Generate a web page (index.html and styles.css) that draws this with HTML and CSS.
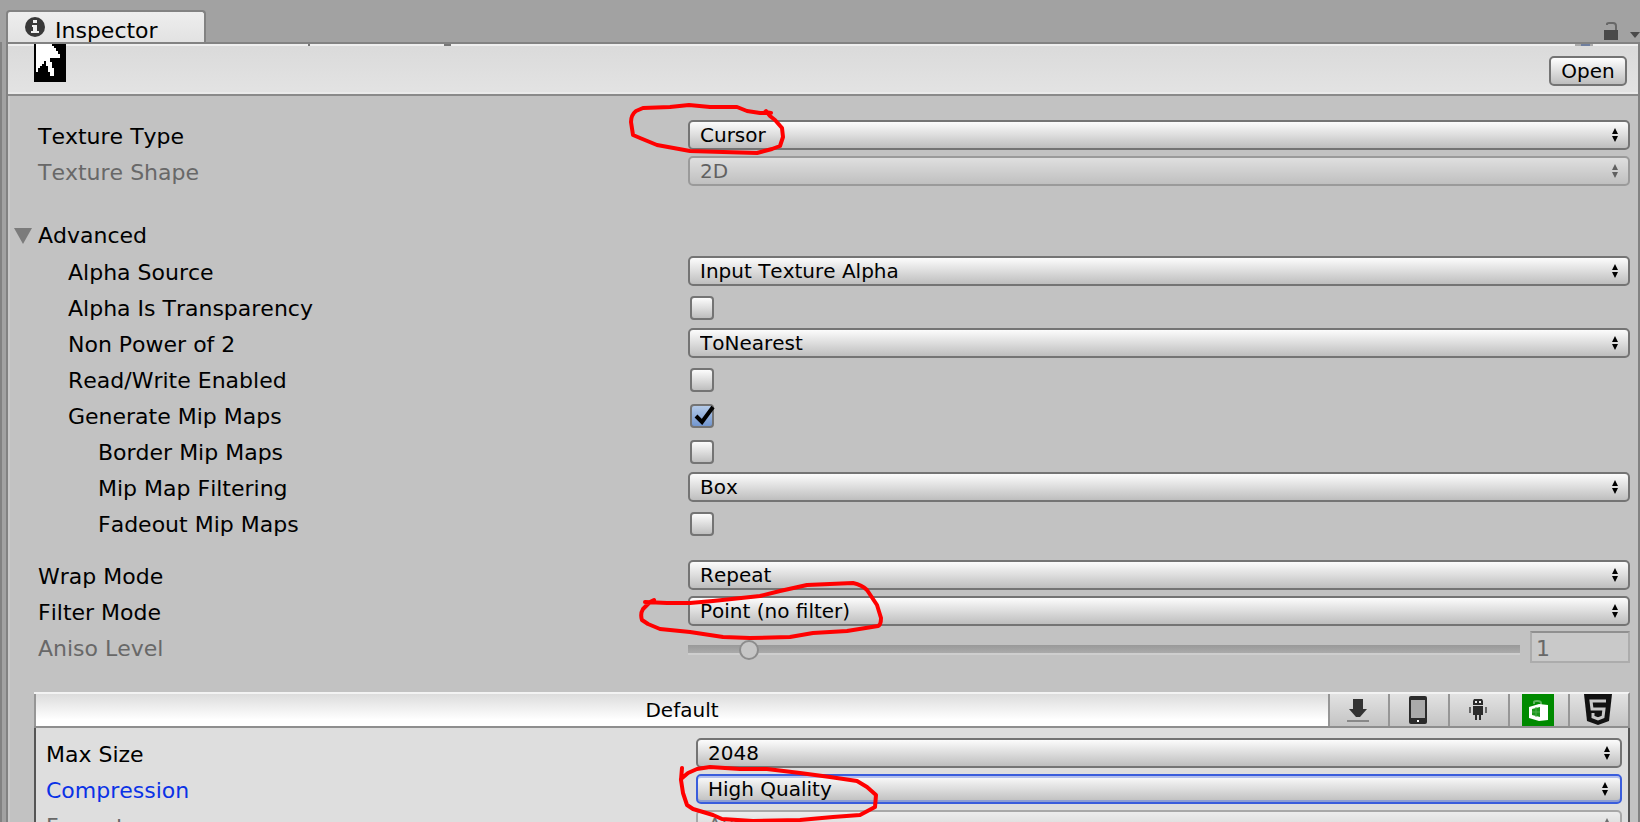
FILE: index.html
```html
<!DOCTYPE html>
<html lang="en">
<head>
    <meta charset="UTF-8">
    <meta name="viewport" content="width=device-width, initial-scale=1.0">
    <title>Inspector</title>
    <link rel="stylesheet" href="styles.css">
</head>
<body>
    <div class="edge"></div>
    <div class="window">
        <nav class="titlebar">
            <div class="tab">
                <svg width="22" height="22" viewBox="0 0 22 22"><circle cx="11" cy="11" r="10" fill="#383838"/><path d="M9 4h4v3H9zM8 9h5v6h2v2H7v-2h2v-4H8z" fill="#eee"/></svg>
                <span>Inspector</span>
            </div>
            <div class="tools">
                <svg width="14" height="20" viewBox="0 0 14 20"><path d="M0 10h14v10H0z" fill="#4a4a4a"/><path d="M3 5V4q0-1 2-1h4q3 0 3 3v4" fill="none" stroke="#686868" stroke-width="2"/></svg>
                <svg width="10" height="6" viewBox="0 0 10 6"><path d="M0 0h10L5 6z" fill="#4a4a4a"/></svg>
            </div>
        </nav>
        <div class="pane">
            <header>
                <svg class="thumb" width="32" height="38" viewBox="0 0 32 38" shape-rendering="crispEdges">
                    <path d="M0 0h32v38H0z"/>
                    <path d="M2 0h16v2h2v2h2v3h2v3h2v4H16v4h2v6h2v8h-4v-4h-2v-6h-2v-5h-2v3H8v2H6v2H4v4H2z" fill="#fff"/>
                </svg>
                <svg class="cut" width="150" height="2" viewBox="0 0 150 2"><path d="M1 0h2v2H1zM137 0h7v2h-7z" fill="#777"/></svg>
                <svg class="cut cut-right" width="18" height="2" viewBox="0 0 18 2"><path d="M0 0h18v2H0z" fill="#aaa"/><path d="M6 0h9v2H6z" fill="#6f7f9f"/></svg>
                <button type="button">Open</button>
            </header>
            <main>
                <div class="row">
                    <label for="type">Texture Type</label>
                    <select id="type"><option>Cursor</option></select>
                </div>
                <div class="row off">
                    <label for="shape">Texture Shape</label>
                    <select id="shape" disabled><option>2D</option></select>
                </div>

                <section class="advanced">
                    <h2><svg width="18" height="16" viewBox="0 0 18 16"><path d="M0 0h18L9 16z" fill="#7b7b7b"/></svg>Advanced</h2>
                    <div class="row in1">
                        <label for="source">Alpha Source</label>
                        <select id="source"><option>Input Texture Alpha</option></select>
                    </div>
                    <div class="row in1">
                        <label for="transparency">Alpha Is Transparency</label>
                        <input type="checkbox" id="transparency">
                    </div>
                    <div class="row in1">
                        <label for="npot">Non Power of 2</label>
                        <select id="npot"><option>ToNearest</option></select>
                    </div>
                    <div class="row in1">
                        <label for="rw">Read/Write Enabled</label>
                        <input type="checkbox" id="rw">
                    </div>
                    <div class="row in1">
                        <label for="mips">Generate Mip Maps</label>
                        <input type="checkbox" id="mips" checked>
                    </div>
                    <div class="row in2">
                        <label for="border">Border Mip Maps</label>
                        <input type="checkbox" id="border">
                    </div>
                    <div class="row in2">
                        <label for="filtering">Mip Map Filtering</label>
                        <select id="filtering"><option>Box</option></select>
                    </div>
                    <div class="row in2">
                        <label for="fadeout">Fadeout Mip Maps</label>
                        <input type="checkbox" id="fadeout">
                    </div>
                </section>

                <section class="sampling">
                    <div class="row">
                        <label for="wrap">Wrap Mode</label>
                        <select id="wrap"><option>Repeat</option></select>
                    </div>
                    <div class="row">
                        <label for="filter">Filter Mode</label>
                        <select id="filter"><option>Point (no filter)</option></select>
                    </div>
                    <div class="row off">
                        <label for="aniso">Aniso Level</label>
                        <div class="slider">
                            <input type="range" id="aniso" min="0" max="16" value="1" disabled>
                            <input type="text" value="1" aria-label="Aniso Level value" disabled>
                        </div>
                    </div>
                </section>

                <section class="platforms">
                    <div class="tabs">
                        <button type="button" class="active">Default</button>
                        <button type="button" aria-label="Standalone">
                            <svg width="22" height="24" viewBox="0 0 22 24"><path d="M6 1h10v10h4l-7 8H9l-7-8h4z" fill="#333"/><path d="M0 22h22v2H0z" fill="#888"/></svg>
                        </button>
                        <button type="button" aria-label="Mobile">
                            <svg width="18" height="28" viewBox="0 0 18 28"><rect width="18" height="28" rx="2" fill="#2b2b2b"/><path d="M2 4h14v18H2z" fill="#aaa"/><path d="M8 24h2v2H8z" fill="#fff"/></svg>
                        </button>
                        <button type="button" aria-label="Android">
                            <svg width="18" height="22" viewBox="0 0 18 22"><path d="M5 0h8l1 2v4H4V2zM4 7h10v9H4zM6 16h2v5H6zM10 16h2v5h-2z" fill="#2b2b2b"/><path d="M0 8h2v6H0zM16 8h2v6h-2z" fill="#666"/><path d="M6 2h2v2H6zM10 2h2v2h-2z" fill="#eee"/></svg>
                        </button>
                        <button type="button" aria-label="Windows Store">
                            <svg width="32" height="32" viewBox="0 0 32 32"><path d="M0 0h32v32H0z" fill="#008a00"/><path d="M12 10V8q0-1 3-1 4 0 4 2v2" fill="none" stroke="#5fb45f" stroke-width="2"/><path d="M7 13l10-3 9 1v15l-9 1-10-3z" fill="#fff"/><path d="M10 15l8-2v10l-8-2z" fill="#1a961a"/><path d="M14 13v10M10 18h8" stroke="#4cae4c"/></svg>
                        </button>
                        <button type="button" aria-label="WebGL">
                            <svg width="28" height="32" viewBox="0 0 28 32"><path d="M0 0h28l-3 27-11 4-11-4z" fill="#111"/><path d="M22 7H7l1 8h12l-1 8-5 2-5-2v-4" fill="none" stroke="#c8c8c8" stroke-width="3"/></svg>
                        </button>
                    </div>
                    <div class="settings">
                        <div class="row">
                            <label for="size">Max Size</label>
                            <select id="size"><option>2048</option></select>
                        </div>
                        <div class="row selected">
                            <label for="compression">Compression</label>
                            <select id="compression"><option>High Quality</option></select>
                        </div>
                        <div class="row off">
                            <label for="format">Format</label>
                            <select id="format" disabled><option>Auto</option></select>
                        </div>
                    </div>
                </section>
            </main>
        </div>
    </div>

    <!-- red pen marks -->
    <svg class="marks" width="900" height="822" viewBox="0 0 900 822">
        <path d="M765 112L771 113L760 113L747 111L737 107L710 107L689 105L670 107L643 108L636 111Q631 115 631 122L633 135L640 138L657 145L690 151L723 152L757 153L772 149L780 146L783 137L782 128L775 120L770 116L766 111"/>
        <path d="M645 602L667 603L690 603L713 601L760 596L780 591L807 585L830 584L853 583Q862 585 867 590L877 605L881 618Q881 625 878 626L847 631L813 633L790 637L750 638L723 637L690 632L660 629L648 624L642 620Q640 614 643 609L650 602L654 600"/>
        <path d="M682 768L681 780L683 793L687 805L693 809L713 815L722 819L753 821L800 820L833 817L860 815L875 807L876 795L867 787L857 781L830 777L800 773L767 769L740 769L710 767L697 769L688 773L681 779"/>
    </svg>
</body>
</html>
```
FILE: styles.css
```css
:root {
    --bar: #a2a2a2;
    --body: #c2c2c2;
    --line: #828282;
    --border: #747474;
    --blue: #0a32e6;
}
* {
    margin: 0;
    padding: 0;
    box-sizing: border-box;
}

body {
    display: flex;
    height: 100vh;
    overflow: hidden;
    background-color: var(--bar);
    color: #000;
    font-family: Verdana, "DejaVu Sans", sans-serif;
    font-size: 22px;
    font-kerning: none;
    line-height: 30px;
}
svg {
    display: block;
    flex: none;
}
button, select, input {
    font-family: inherit;
    font-size: 20px;
    font-kerning: none;
    color: #000;
    appearance: none;
    border-radius: 0;
}

/* sliver of the neighbouring panel */
.edge {
    width: 6px;
    margin-top: 42px;
    border-left: 2px solid var(--line);
}
.window {
    flex: 1;
    min-width: 0;
    display: flex;
    flex-direction: column;
}
.titlebar {
    display: flex;
    justify-content: space-between;
    height: 42px;
    padding-top: 10px;
}
.tab {
    display: flex;
    width: 200px;
    height: 32px;
    padding-left: 16px;
    gap: 9px;
    border: 2px solid var(--line);
    border-bottom: none;
    border-radius: 4px 4px 0 0;
    background: linear-gradient(#eee, #e2e2e2);
}
.tab svg {
    margin-top: 4px;
}
.tab span {
    padding-top: 4px;
}
.tools {
    display: flex;
    align-items: flex-end;
    padding-bottom: 2px;
    gap: 12px;
}
.tools svg + svg {
    margin-bottom: 2px;
}
.pane {
    flex: 1;
    min-height: 0;
    overflow: hidden;
    border: 2px solid var(--line);
    border-bottom: none;
    background-color: var(--body);
    box-shadow: inset 2px 0 #cacaca;
}

header {
    position: relative;
    display: flex;
    justify-content: space-between;
    height: 52px;
    padding: 0 11px 0 26px;
    background: linear-gradient(#dadada, #e3e3e3);
    border-bottom: 2px solid #8a8a8a;
    box-shadow: inset 0 2px #eee, inset 0 -2px #eaeaea;
}
header button {
    width: 78px;
    height: 30px;
    margin-top: 12px;
    border: 2px solid var(--border);
    border-radius: 5px;
    background: linear-gradient(#fff, #bebebe);
}
/* bottoms of the scrolled-away title row */
.cut {
    position: absolute;
    top: 0;
    left: 299px;
}
.cut-right {
    left: auto;
    right: 45px;
}

main {
    padding: 21px 8px 0 30px;
}
.row {
    display: flex;
    align-items: center;
    height: 36px;
}
.row label {
    flex: none;
    width: 650px;
    padding-top: 3px;
}
.in1 label {
    padding-left: 30px;
}
.in2 label {
    padding-left: 60px;
}
.off label {
    color: #686868;
}

select {
    flex: 1;
    min-width: 0;
    height: 30px;
    padding: 0 10px;
    border: 2px solid var(--border);
    border-radius: 5px;
    background:
        url("data:image/svg+xml,%3Csvg xmlns='http://www.w3.org/2000/svg' width='6' height='14'%3E%3Cpath d='M3 0l3 6H0zM3 14l3-6H0z'/%3E%3C/svg%3E") no-repeat right 10px center,
        linear-gradient(#fcfcfc, #bebebe);
}
select:disabled {
    opacity: .5;
}

input[type=checkbox] {
    position: relative;
    width: 24px;
    height: 24px;
    margin: 2px 0 0 2px;
    border: 2px solid var(--border);
    border-radius: 4px;
    background: linear-gradient(#fcfcfc, #bebebe);
}
input[type=checkbox]:checked {
    background: linear-gradient(#b4cae8, #7296cf);
}
input[type=checkbox]:checked::after {
    content: "";
    position: absolute;
    left: 2px;
    top: -1px;
    width: 22px;
    height: 20px;
    background: url("data:image/svg+xml,%3Csvg xmlns='http://www.w3.org/2000/svg' width='22' height='20'%3E%3Cpath d='M2 11l6 6L19 2' fill='none' stroke='%23000' stroke-width='4'/%3E%3C/svg%3E") no-repeat;
}

.advanced {
    margin-top: 28px;
}
.advanced h2 {
    display: flex;
    align-items: center;
    height: 36px;
    margin-left: -24px;
    padding-top: 2px;
    gap: 6px;
    font-size: 22px;
    font-weight: normal;
}
.sampling {
    margin-top: 16px;
}

.slider {
    flex: 1;
    display: flex;
    align-items: center;
    gap: 10px;
}
.slider input[type=range] {
    flex: 1;
    height: 20px;
    margin-top: 5px;
    background: linear-gradient(#999, #aaa 80%, #cecece 80%) no-repeat center / 100% 10px;
}
input[type=range]::-webkit-slider-thumb {
    appearance: none;
    width: 20px;
    height: 20px;
    border: 2px solid #8c8c8c;
    border-radius: 50%;
    background: #c6c6c6;
}
.slider input[type=text] {
    width: 100px;
    height: 32px;
    padding: 2px 4px 0;
    border: 2px solid #acacac;
    border-top-color: #909090;
    background-color: #c9c9c9;
    font-size: 22px;
    color: #686868;
}

.platforms {
    margin: 27px 0 0 -4px;
}
.tabs {
    display: flex;
    height: 36px;
    border-top: 2px solid #f3f3f3;
    border-bottom: 2px solid #8e8e8e;
    border-right: 2px solid #969696;
}
.tabs button {
    display: flex;
    align-items: center;
    justify-content: center;
    width: 60px;
    padding-right: 3px;
    border: none;
    border-left: 2px solid #969696;
    background: linear-gradient(#e2e2e2, #c4c4c4);
}
.tabs .active {
    flex: 1;
    padding-right: 0;
    background: linear-gradient(#dcdcdc, #fff 80%);
}
.settings {
    padding: 7px 6px 0 10px;
    border: 2px solid #555;
    border-top: none;
    background-color: #dedede;
}
.selected label {
    color: var(--blue);
}
.selected select {
    padding-right: 12px;
    border-color: #3a5ddc;
    box-shadow: inset 0 2px #b4c0ec, inset 0 -2px #8f9fd2;
    background-position: right 12px center, 0 0;
}

.marks {
    position: absolute;
    left: 0;
    top: 0;
    fill: none;
    stroke: #f00;
    stroke-width: 4;
    stroke-linejoin: round;
    stroke-linecap: round;
    pointer-events: none;
}
```
